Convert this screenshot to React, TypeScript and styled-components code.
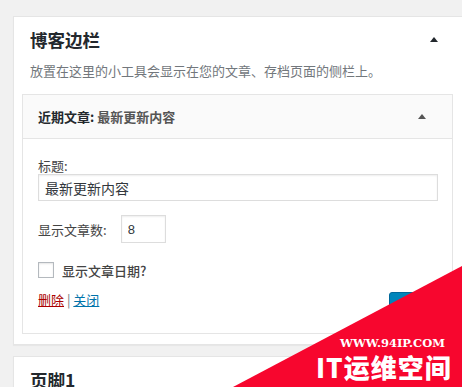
import React from 'react';
import styled, { createGlobalStyle } from 'styled-components';

const GlobalStyle = createGlobalStyle`
  html, body {
    margin: 0;
    padding: 0;
    background: #f1f1f1;
    overflow: hidden;
  }
  body {
    font-family: "Noto Sans CJK SC", "Noto Sans", "Liberation Sans", sans-serif;
    color: #444;
    font-size: 13px;
  }
`;

const Page = styled.div`
  width: 462px;
  height: 387px;
  position: relative;
  overflow: hidden;
  padding: 16px 0 0 13px;
  box-sizing: border-box;
`;

const SidebarCard = styled.div`
  width: 452px;
  box-sizing: border-box;
  background: #fff;
  border: 1px solid #e5e5e5;
  box-shadow: 0 1px 1px rgba(0, 0, 0, 0.04);
  padding: 0 0 10px 8px;
  margin-bottom: 11px;
`;

const CardHeader = styled.div`
  display: flex;
  align-items: center;
  justify-content: space-between;
  height: 45px;
  padding: 0 26px 0 8px;
`;

const CardTitle = styled.h2`
  margin: 0;
  font-size: 17.5px;
  font-weight: 700;
  color: #23282d;
  line-height: 24px;
`;

const Arrow = styled.span<{ $color?: string }>`
  width: 0;
  height: 0;
  border-left: 4px solid transparent;
  border-right: 4px solid transparent;
  border-bottom: 5px solid ${p => p.$color || '#23282d'};
`;

const Description = styled.p`
  margin: 0 0 14px 8px;
  font-size: 13px;
  line-height: 18px;
  color: #72777c;
`;

const Widget = styled.div`
  width: 431px;
  box-sizing: border-box;
  border: 1px solid #e5e5e5;
  background: #fff;
`;

const WidgetTop = styled.div`
  display: flex;
  align-items: center;
  justify-content: space-between;
  height: 43px;
  padding: 0 26px 0 15px;
  background: #fafafa;
  border-bottom: 1px solid #e5e5e5;
`;

const WidgetTitle = styled.h3`
  margin: 0;
  font-size: 13px;
  font-weight: 700;
  color: #23282d;
  line-height: 18px;
`;

const InTitle = styled.span`
  color: #555;
  font-weight: 600;
`;

const WidgetInside = styled.div`
  padding: 18px 15px 14px 15px;
`;

const Label = styled.label`
  display: block;
  font-size: 13px;
  line-height: 17px;
  color: #444;
`;

const TextInput = styled.input`
  display: block;
  width: 400px;
  height: 27px;
  box-sizing: border-box;
  margin: 0 0 14px;
  padding: 0 6px;
  border: 1px solid #ddd;
  box-shadow: inset 0 1px 2px rgba(0, 0, 0, 0.07);
  font-family: inherit;
  font-size: 14px;
  color: #32373c;
  outline: none;
`;

const InlineRow = styled.div`
  display: flex;
  align-items: center;
  gap: 14px;
  height: 28px;
  margin-bottom: 19px;
`;

const NumberInput = styled.input`
  width: 45px;
  height: 28px;
  box-sizing: border-box;
  padding: 0 6px;
  border: 1px solid #ddd;
  box-shadow: inset 0 1px 2px rgba(0, 0, 0, 0.07);
  font-family: "Liberation Sans", sans-serif;
  font-size: 13px;
  color: #32373c;
  outline: none;
`;

const CheckRow = styled.div`
  display: flex;
  align-items: center;
  gap: 8px;
  height: 16px;
  margin-bottom: 13px;
`;

const CheckBox = styled.span`
  width: 16px;
  height: 16px;
  box-sizing: border-box;
  border: 1px solid #b4b9be;
  background: #fff;
  box-shadow: inset 0 1px 2px rgba(0, 0, 0, 0.1);
`;

const CheckLabel = styled.span`
  font-size: 13px;
  color: #444;
  font-weight: 500;
`;

const ControlRow = styled.div`
  display: flex;
  align-items: flex-start;
  justify-content: space-between;
  height: 28px;
`;

const Links = styled.div`
  font-size: 13px;
  line-height: 18px;
  color: #72777c;
`;

const Link = styled.a<{ $danger?: boolean }>`
  color: ${p => (p.$danger ? '#a00' : '#0073aa')};
  text-decoration: underline;
`;

const SaveButton = styled.button`
  width: 48px;
  height: 28px;
  border: 1px solid #006799;
  border-radius: 3px;
  background: #0085ba;
  color: #fff;
  font-family: inherit;
  font-size: 13px;
  margin-top: 1px;
`;

const FooterCard = styled(SidebarCard)`
  padding-bottom: 0;
`;

const Watermark = styled.div`
  position: absolute;
  right: 0;
  bottom: 0;
  width: 229px;
  height: 121px;
  background: #f7062e;
  clip-path: polygon(100% 0, 100% 100%, 0 100%);
`;

const WatermarkUrl = styled.div`
  position: absolute;
  left: 340px;
  top: 336px;
  line-height: 14px;
  white-space: nowrap;
  font-family: "DejaVu Serif", "Liberation Serif", serif;
  font-weight: 700;
  font-size: 11.5px;
  color: #fff;
`;

const WatermarkName = styled.div`
  position: absolute;
  left: 316px;
  top: 353px;
  white-space: nowrap;
  font-family: "Noto Sans CJK SC", sans-serif;
  font-weight: 900;
  font-size: 26px;
  line-height: 28px;
  color: #fff;
  letter-spacing: 1px;
`;

const App: React.FC = () => {
  return (
    <>
      <GlobalStyle />
      <Page>
        <SidebarCard>
          <CardHeader>
            <CardTitle>博客边栏</CardTitle>
            <Arrow />
          </CardHeader>
          <Description>放置在这里的小工具会显示在您的文章、存档页面的侧栏上。</Description>

          <Widget>
            <WidgetTop>
              <WidgetTitle>
                近期文章: <InTitle>最新更新内容</InTitle>
              </WidgetTitle>
              <Arrow $color="#555" />
            </WidgetTop>
            <WidgetInside>
              <Label>标题:</Label>
              <TextInput defaultValue="最新更新内容" />
              <InlineRow>
                <Label>显示文章数:</Label>
                <NumberInput defaultValue="8" />
              </InlineRow>
              <CheckRow>
                <CheckBox />
                <CheckLabel>显示文章日期?</CheckLabel>
              </CheckRow>
              <ControlRow>
                <Links>
                  <Link $danger href="#">删除</Link> | <Link href="#">关闭</Link>
                </Links>
                <SaveButton>保存</SaveButton>
              </ControlRow>
            </WidgetInside>
          </Widget>
        </SidebarCard>

        <FooterCard>
          <CardHeader>
            <CardTitle>页脚1</CardTitle>
          </CardHeader>
        </FooterCard>

        <Watermark />
        <WatermarkUrl>WWW.94IP.COM</WatermarkUrl>
        <WatermarkName>IT运维空间</WatermarkName>
      </Page>
    </>
  );
};

export default App;
